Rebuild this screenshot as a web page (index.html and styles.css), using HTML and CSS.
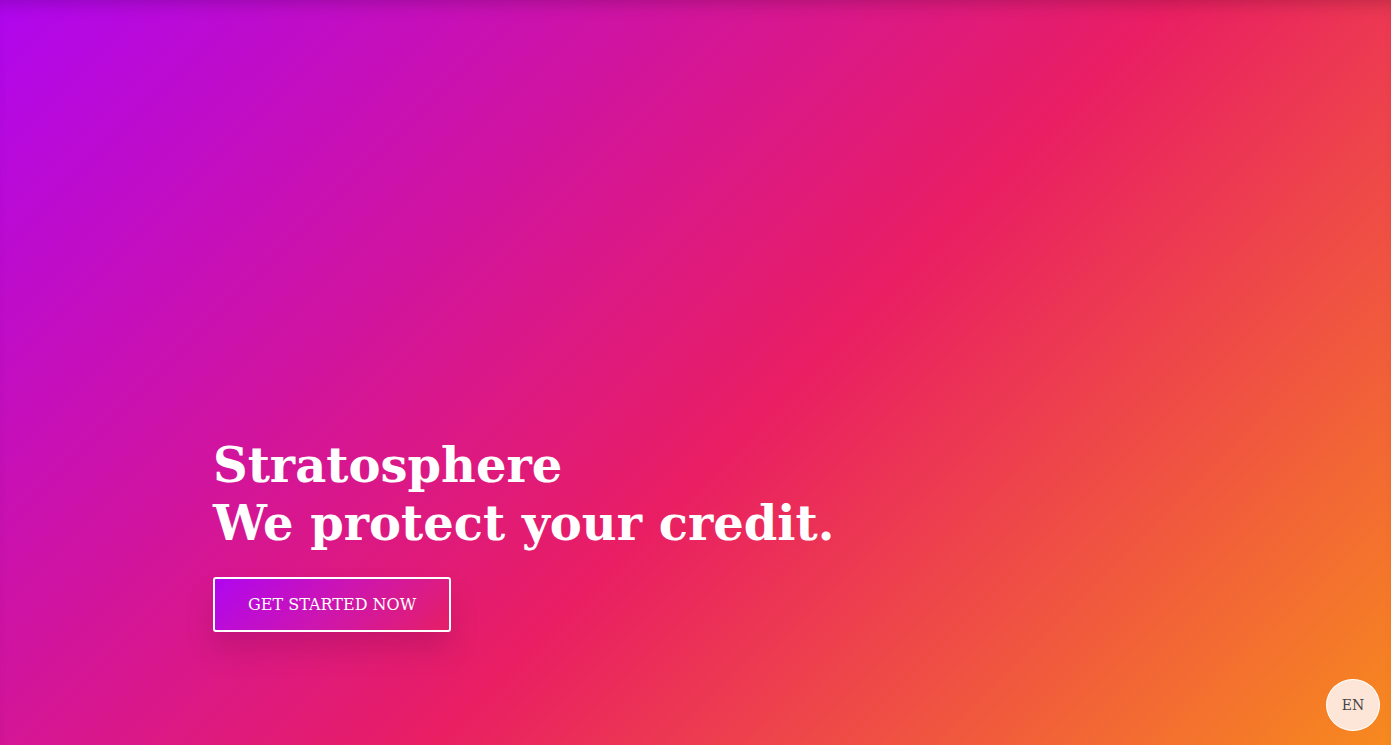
FILE: index.html
```html
<!DOCTYPE html>
<html lang="en">
<head>
<meta charset="utf-8">
<title>Stratosphere</title>
<link rel="stylesheet" href="styles.css">
</head>
<body>
<main class="hero">
  <div class="hero-content">
    <h1 class="hero-title">Stratosphere<br>We protect your credit.</h1>
    <a class="cta" href="#">GET STARTED NOW</a>
  </div>
</main>
<button class="lang">EN</button>
</body>
</html>
```
FILE: styles.css
```css
html, body {
  margin: 0;
  padding: 0;
  height: 100%;
}
body {
  font-family: "DejaVu Serif", serif;
  overflow: hidden;
}
.hero {
  position: relative;
  height: 745px;
  box-sizing: border-box;
  background: linear-gradient(135deg, #b006ef 0%, #e91e63 55%, #f78a1e 100%);
  display: flex;
  flex-direction: column;
  justify-content: flex-end;
  padding: 0 0 113px 213px;
  box-shadow: inset 0 14px 18px -12px rgba(0, 0, 0, 0.22);
}
.hero-content {
  display: flex;
  flex-direction: column;
  align-items: flex-start;
}
.hero-title {
  margin: 0 0 25px 0;
  color: #ffffff;
  font-weight: bold;
  font-size: 48px;
  line-height: 58px;
}
.cta {
  display: inline-block;
  padding: 16px 33px;
  line-height: 19px;
  font-size: 16px;
  color: #ffffff;
  text-decoration: none;
  border: 2px solid #ffffff;
  border-radius: 3px;
  background: linear-gradient(135deg, #b006f0 0%, #cd15b0 50%, #e61f66 100%);
  box-shadow: 0 18px 28px rgba(90, 0, 60, 0.18);
}
.lang {
  position: fixed;
  right: 11px;
  bottom: 14px;
  width: 54px;
  height: 52px;
  border-radius: 50%;
  border: 1px solid #ffffff;
  background: #fde6d8;
  color: #444444;
  font-family: "DejaVu Serif", serif;
  font-size: 14px;
  padding: 0;
}
```
